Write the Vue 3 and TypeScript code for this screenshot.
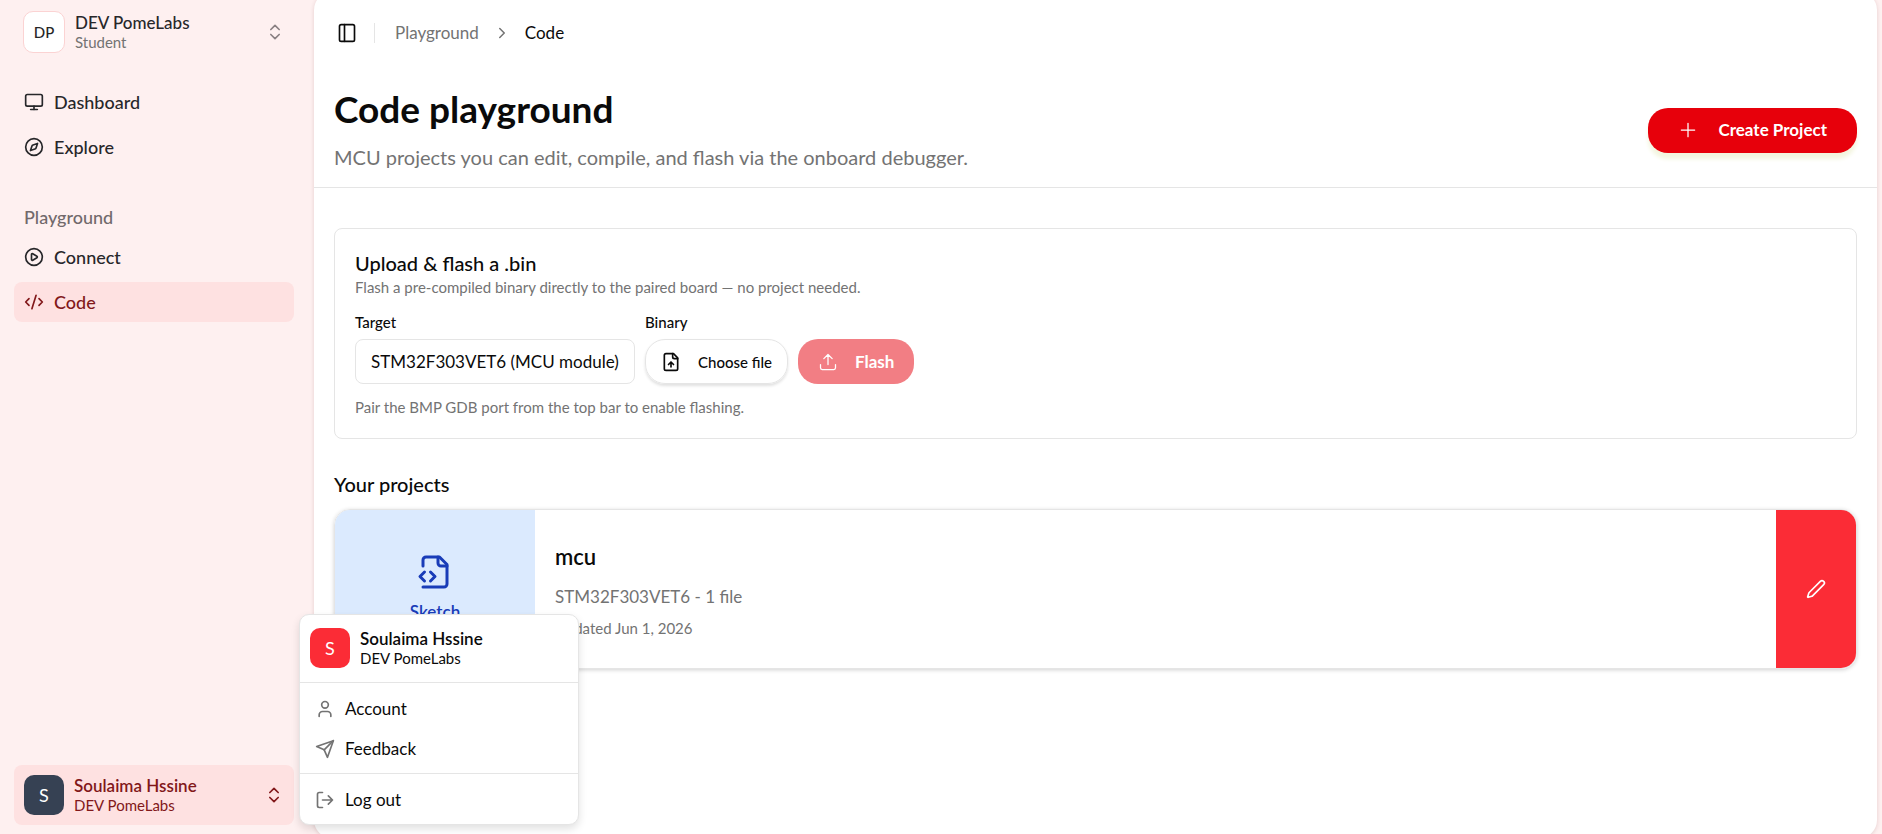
<script setup lang="ts">
import { ref } from 'vue'

interface NavItem {
  label: string
  icon: string[]
  active?: boolean
}

const mainNav: NavItem[] = [
  {
    label: 'Dashboard',
    icon: ['M4 3h16a2 2 0 0 1 2 2v10a2 2 0 0 1-2 2H4a2 2 0 0 1-2-2V5a2 2 0 0 1 2-2z', 'M8 21h8', 'M12 17v4'],
  },
  {
    label: 'Explore',
    icon: [
      'M12 2a10 10 0 1 0 0 20 10 10 0 0 0 0-20z',
      'M16.24 7.76l-1.8 5.41a2 2 0 0 1-1.27 1.27l-5.41 1.8 1.8-5.41a2 2 0 0 1 1.27-1.27z',
    ],
  },
]

const playgroundNav: NavItem[] = [
  {
    label: 'Connect',
    icon: [
      'M12 2a10 10 0 1 0 0 20 10 10 0 0 0 0-20z',
      'M9 9a1 1 0 0 1 1.5-.87l5 3a1 1 0 0 1 0 1.74l-5 3A1 1 0 0 1 9 15z',
    ],
  },
  { label: 'Code', icon: ['M18 16l4-4-4-4', 'M6 8l-4 4 4 4', 'M14.5 4l-5 16'], active: true },
]

const accountActions: NavItem[] = [
  { label: 'Account', icon: ['M19 21v-2a4 4 0 0 0-4-4H9a4 4 0 0 0-4 4v2', 'M12 3a4 4 0 1 0 0 8 4 4 0 0 0 0-8z'] },
  { label: 'Feedback', icon: ['M22 2L15 22l-4-9-9-4z', 'M22 2L11 13'] },
]

const target = ref('vet6')
const menuOpen = ref(true)
</script>

<template>
  <div class="shell">
    <aside class="sidebar">
      <button type="button" class="identity team">
        <span class="avatar outlined">DP</span>
        <span class="who">
          <strong class="medium">DEV PomeLabs</strong>
          <small class="muted">Student</small>
        </span>
        <svg class="icon" viewBox="0 0 24 24"><path d="M7 15l5 5 5-5M7 9l5-5 5 5" /></svg>
      </button>

      <nav class="nav">
        <a v-for="item in mainNav" :key="item.label" href="#" class="nav-item">
          <svg class="icon" viewBox="0 0 24 24"><path v-for="d in item.icon" :key="d" :d="d" /></svg>
          {{ item.label }}
        </a>
      </nav>

      <nav class="nav group" aria-labelledby="group-title">
        <h2 id="group-title" class="group-title">Playground</h2>
        <a
          v-for="item in playgroundNav"
          :key="item.label"
          href="#"
          class="nav-item"
          :class="{ active: item.active }"
        >
          <svg class="icon" viewBox="0 0 24 24"><path v-for="d in item.icon" :key="d" :d="d" /></svg>
          {{ item.label }}
        </a>
      </nav>

      <div class="account">
        <button type="button" class="identity user" :aria-expanded="menuOpen" @click="menuOpen = !menuOpen">
          <span class="avatar dark">S</span>
          <span class="who">
            <strong>Soulaima Hssine</strong>
            <small>DEV PomeLabs</small>
          </span>
          <svg class="icon" viewBox="0 0 24 24"><path d="M7 15l5 5 5-5M7 9l5-5 5 5" /></svg>
        </button>

        <div v-if="menuOpen" class="menu">
          <div class="menu-head">
            <span class="avatar red">S</span>
            <span class="who">
              <strong>Soulaima Hssine</strong>
              <small>DEV PomeLabs</small>
            </span>
          </div>
          <div class="menu-group">
            <button v-for="item in accountActions" :key="item.label" type="button" class="menu-item">
              <svg class="icon" viewBox="0 0 24 24"><path v-for="d in item.icon" :key="d" :d="d" /></svg>
              {{ item.label }}
            </button>
          </div>
          <div class="menu-group">
            <button type="button" class="menu-item">
              <svg class="icon" viewBox="0 0 24 24">
                <path d="M9 21H5a2 2 0 0 1-2-2V5a2 2 0 0 1 2-2h4M16 17l5-5-5-5M21 12H9" />
              </svg>
              Log out
            </button>
          </div>
        </div>
      </div>
    </aside>

    <main class="panel">
      <header class="topbar">
        <button type="button" class="toggle" aria-label="Toggle sidebar">
          <svg class="icon" viewBox="0 0 24 24"><rect x="3" y="2" width="18" height="20" rx="2" /><path d="M9 2v20" /></svg>
        </button>
        <span class="separator"></span>
        <a href="#" class="crumb">Playground</a>
        <svg class="icon small muted" viewBox="0 0 24 24"><path d="M9 18l6-6-6-6" /></svg>
        <span class="current">Code</span>
      </header>

      <section class="heading">
        <div>
          <h1>Code playground</h1>
          <p class="lead">MCU projects you can edit, compile, and flash via the onboard debugger.</p>
        </div>
        <button type="button" class="create">
          <svg class="icon" viewBox="0 0 24 24"><path d="M4 12h16M12 4v16" /></svg>
          Create Project
        </button>
      </section>

      <section class="card flash-card">
        <h2 class="title">Upload &amp; flash a .bin</h2>
        <p class="note">Flash a pre-compiled binary directly to the paired board — no project needed.</p>
        <div class="fields">
          <div class="field">
            <label for="target">Target</label>
            <select id="target" v-model="target" class="select">
              <option value="vet6">STM32F303VET6 (MCU module)</option>
            </select>
          </div>
          <div class="field">
            <label for="binary">Binary</label>
            <button id="binary" type="button" class="choose">
              <svg class="icon" viewBox="0 0 24 24">
                <path d="M15 2H6a2 2 0 0 0-2 2v16a2 2 0 0 0 2 2h12a2 2 0 0 0 2-2V7z" />
                <path d="M14 2v4a2 2 0 0 0 2 2h4M12 12v6M15 15l-3-3-3 3" />
              </svg>
              Choose file
            </button>
          </div>
          <button type="button" class="flash" disabled>
            <svg class="icon" viewBox="0 0 24 24">
              <path d="M12 3v12M17 8l-5-5-5 5M21 15v4a2 2 0 0 1-2 2H5a2 2 0 0 1-2-2v-4" />
            </svg>
            Flash
          </button>
        </div>
        <p class="note">Pair the BMP GDB port from the top bar to enable flashing.</p>
      </section>

      <section class="projects">
        <h2 class="title">Your projects</h2>
        <article class="card project">
          <div class="kind">
            <svg class="icon large" viewBox="0 0 24 24">
              <path d="M4 22h14a2 2 0 0 0 2-2V7l-5-5H6a2 2 0 0 0-2 2v4" />
              <path d="M14 2v4a2 2 0 0 0 2 2h4M5 12l-3 3 3 3M9 18l3-3-3-3" />
            </svg>
            Sketch
          </div>
          <div class="details">
            <h3>mcu</h3>
            <p class="meta">STM32F303VET6 - 1 file</p>
            <p class="note">Updated Jun 1, 2026</p>
          </div>
          <button type="button" class="edit" aria-label="Edit project">
            <svg class="icon" viewBox="0 0 24 24">
              <path d="M21.17 6.81a1 1 0 0 0-3.98-3.98L3.84 16.17a2 2 0 0 0-.5.83l-1.32 4.35a.5.5 0 0 0 .62.62l4.35-1.32a2 2 0 0 0 .83-.5z" />
            </svg>
          </button>
        </article>
      </section>
    </main>
  </div>
</template>

<style>
body {
  margin: 0;
}
</style>

<style scoped>
.shell,
.shell * {
  box-sizing: border-box;
}
.shell {
  display: flex;
  min-height: 100vh;
  overflow: hidden;
  background: #fef0f0;
  color: #0a0a0a;
  font-family: Lato, 'Open Sans', sans-serif;
  font-size: 17px;
  line-height: 24px;
}
h1,
h2,
h3,
p {
  margin: 0;
}
button,
select {
  margin: 0;
  border: 0;
  background: none;
  color: inherit;
  font: inherit;
  cursor: pointer;
}
a {
  color: inherit;
  text-decoration: none;
}
.icon {
  flex: none;
  width: 20px;
  height: 20px;
  fill: none;
  stroke: currentColor;
  stroke-width: 2;
  stroke-linecap: round;
  stroke-linejoin: round;
}
.icon.small {
  width: 18px;
  height: 18px;
}
.icon.large {
  width: 36px;
  height: 36px;
}
.muted {
  color: #737373;
}

/* Sidebar */
.sidebar {
  display: flex;
  flex: none;
  flex-direction: column;
  width: 314px;
  padding: 4px 20px 9px 14px;
}
.identity {
  display: flex;
  align-items: center;
  gap: 10px;
  width: 100%;
  padding: 10px;
  border-radius: 8px;
  text-align: left;
}
.team {
  padding: 7px 9px;
}
.team .icon {
  color: #8a8083;
}
.avatar {
  display: grid;
  flex: none;
  place-items: center;
  width: 40px;
  height: 40px;
  border-radius: 10px;
  color: #fff;
  font-size: 18px;
}
.avatar.outlined {
  width: 42px;
  height: 42px;
  border: 1px solid #fbd3d3;
  background: #fff;
  color: #262626;
  font-size: 15px;
  font-weight: 500;
}
.avatar.dark {
  background: #364153;
}
.avatar.red {
  background: #fb2c36;
}
.who {
  display: flex;
  flex: 1;
  flex-direction: column;
  min-width: 0;
}
.who strong {
  font-weight: 600;
  line-height: 20px;
}
.who strong.medium {
  color: #27272a;
  font-weight: 500;
}
.who small {
  font-size: 15px;
  line-height: 18px;
}
.nav {
  display: flex;
  flex-direction: column;
  gap: 5px;
  margin-top: 22px;
}
.nav-item {
  display: flex;
  align-items: center;
  gap: 10px;
  height: 40px;
  padding: 0 10px;
  border-radius: 8px;
  color: #27272a;
  font-size: 18px;
  font-weight: 500;
}
.nav-item.active {
  background: #fee1e1;
  color: #82181a;
}
.nav.group {
  margin-top: 30px;
}
.group-title {
  padding: 0 10px;
  color: #71696b;
  font-size: 18px;
  font-weight: 500;
  line-height: 40px;
  margin-bottom: -5px;
}
.account {
  position: relative;
  margin-top: auto;
}
.user {
  background: #fee1e1;
  color: #82181a;
}

/* Account menu */
.menu {
  position: absolute;
  bottom: 0;
  left: 100%;
  z-index: 10;
  width: 280px;
  margin-left: 5px;
  border: 1px solid #e5e5e5;
  border-radius: 10px;
  background: #fff;
  box-shadow: 0 4px 8px rgba(0, 0, 0, 0.12);
}
.menu-head {
  display: flex;
  align-items: center;
  gap: 10px;
  padding: 13px 10px 14px;
}
.menu-group {
  padding: 6px 5px 4px;
  border-top: 1px solid #e5e5e5;
}
.menu-item {
  display: flex;
  align-items: center;
  gap: 10px;
  width: 100%;
  height: 40px;
  padding: 0 10px;
  text-align: left;
}
.menu-item .icon {
  color: #737373;
}

/* Main panel, running past the top and bottom edges of the window */
.panel {
  flex: 1;
  min-width: 0;
  margin: -8px 5px -4px 0;
  padding-top: 8px;
  border-radius: 18px;
  background: #fff;
  box-shadow: 0 1px 4px rgba(80, 0, 0, 0.14);
}
.topbar {
  display: flex;
  align-items: center;
  height: 65px;
  padding: 0 20px;
}
.toggle {
  display: grid;
  place-items: center;
  padding: 0 3px;
}
.separator {
  width: 1px;
  height: 20px;
  margin: 0 20px 0 14px;
  background: #e5e5e5;
}
.topbar .small {
  margin: 0 14px;
}
.crumb {
  color: #737373;
}
.heading {
  display: flex;
  align-items: center;
  justify-content: space-between;
  padding: 20px 20px 16px;
  border-bottom: 1px solid #e5e5e5;
}
.heading .create {
  margin-top: 4px;
}
h1 {
  font-size: 37px;
  font-weight: 700;
  line-height: 48px;
}
.lead {
  margin-top: 10px;
  color: #737373;
  font-size: 20px;
  line-height: 28px;
}
.create {
  display: flex;
  align-items: center;
  gap: 20px;
  height: 45px;
  padding: 0 30px;
  border-radius: 20px;
  background: #e7000b;
  box-shadow: 0 6px 4px #f3f5df;
  color: #fff;
  font-weight: 700;
}
.create .icon {
  stroke-width: 1.5;
}
.card {
  border: 1px solid #e5e5e5;
  border-radius: 8px;
}
.flash-card {
  margin: 40px 20px 0;
  padding: 22px 20px 20px;
}
.title {
  font-size: 20px;
  font-weight: 500;
  line-height: 24px;
}
.note {
  color: #737373;
  font-size: 15px;
  line-height: 24px;
}
.fields {
  display: flex;
  flex-wrap: wrap;
  align-items: flex-end;
  gap: 10px;
  margin: 12px 0;
}
.field {
  display: flex;
  flex-direction: column;
  gap: 6px;
}
.field label {
  font-size: 15px;
  font-weight: 500;
  line-height: 22px;
}
.select {
  height: 45px;
  padding: 0 15px;
  border: 1px solid #e5e5e5;
  border-radius: 8px;
  appearance: none;
}
.choose,
.flash {
  display: flex;
  align-items: center;
  height: 45px;
  border-radius: 20px;
}
.choose {
  gap: 17px;
  padding: 0 15px;
  border: 1px solid #e5e5e5;
  box-shadow: 0 2px 3px rgba(0, 0, 0, 0.12);
  font-size: 15px;
  font-weight: 500;
}
.flash {
  gap: 17px;
  padding: 0 20px;
  background: #e7000b;
  color: #fff;
  font-weight: 700;
  opacity: 0.5;
}
.flash .icon {
  stroke-width: 1.5;
}
.flash-card .fields + .note {
  line-height: 22px;
}
.projects {
  padding: 33px 20px 40px;
}
.project {
  display: flex;
  min-height: 160px;
  margin-top: 13px;
  border-radius: 16px;
  overflow: hidden;
  box-shadow: 0 1px 4px rgba(0, 0, 0, 0.18);
}
.kind {
  display: flex;
  flex: none;
  flex-direction: column;
  align-items: center;
  justify-content: center;
  gap: 10px;
  width: 200px;
  background: #dbeafe;
  color: #193cb8;
  font-weight: 600;
}
.details {
  flex: 1;
  padding: 33px 20px 0;
}
h3 {
  font-size: 22px;
  font-weight: 600;
  line-height: 28px;
}
.meta {
  margin: 14px 0 7px;
  color: #737373;
  line-height: 24px;
}
.edit {
  display: grid;
  flex: none;
  place-items: center;
  width: 80px;
  background: #fb2c36;
  color: #fff;
}
</style>
